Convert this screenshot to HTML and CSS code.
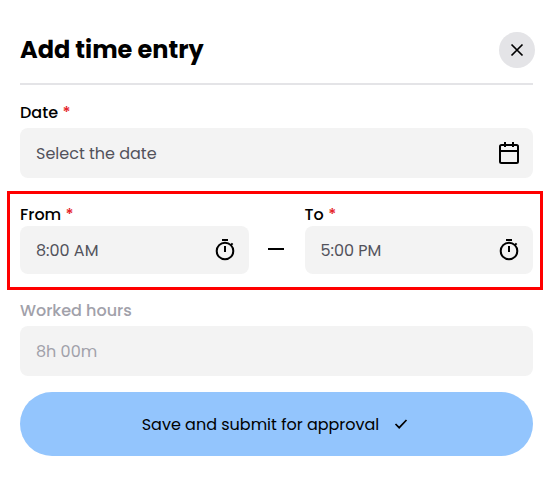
FILE: index.html
```html
<!DOCTYPE html>
<html lang="en">
<head>
<meta charset="utf-8">
<title>Add time entry</title>
<link rel="stylesheet" href="styles.css">
</head>
<body>
<main class="dialog">
  <header class="header">
    <h1 class="title">Add time entry</h1>
    <button class="close" aria-label="Close">
      <svg width="36" height="36" viewBox="0 0 36 36"><path d="M12.5 12.5l11 11M23.5 12.5l-11 11"/></svg>
    </button>
  </header>
  <section class="group">
    <div class="label"><span>Date</span><span class="req">*</span></div>
    <div class="field tall"><span class="value">Select the date</span>
      <svg width="24" height="24" viewBox="0 0 24 24"><rect x="3" y="4" width="18" height="18" rx="1.5"/><path d="M3 10h18M8 1v5M16 1v5"/></svg>
    </div>
  </section>
  <section class="times">
    <div class="group">
      <div class="label"><span>From</span><span class="req">*</span></div>
      <div class="field"><span class="value">8:00 AM</span>
        <svg width="24" height="24" viewBox="0 0 24 24"><circle cx="12" cy="13" r="8.3"/><path d="M9 2h6M12 8v6M17.6 7.4l2-2"/></svg>
      </div>
    </div>
    <span class="dash"></span>
    <div class="group">
      <div class="label"><span>To</span><span class="req">*</span></div>
      <div class="field"><span class="value">5:00 PM</span>
        <svg width="24" height="24" viewBox="0 0 24 24"><circle cx="12" cy="13" r="8.3"/><path d="M9 2h6M12 8v6M17.6 7.4l2-2"/></svg>
      </div>
    </div>
  </section>
  <section class="group worked">
    <div class="label"><span>Worked hours</span></div>
    <div class="field tall"><span class="value">8h 00m</span></div>
  </section>
  <button class="save"><span class="value">Save and submit for approval</span>
    <svg width="14" height="12" viewBox="0 0 14 12"><path d="M1.5 6l3.7 3.7L12.5 2"/></svg>
  </button>
</main>
</body>
</html>
```
FILE: styles.css
```css
* { box-sizing: border-box; }
body {
  margin: 0;
  background: #fff;
  color: #000;
  font: 16px/24px Poppins, Inter, "Open Sans", sans-serif;
}
button { border: 0; padding: 0; font: inherit; color: inherit; }
svg { display: block; fill: none; stroke: #000; stroke-width: 2; flex: none; }
span { white-space: nowrap; }
.dialog { width: 553px; height: 480px; padding: 32px 20px 0; }
.header {
  display: flex;
  justify-content: space-between;
  height: 53px;
  border-bottom: 2px solid #e4e4e7;
  margin-bottom: 15px;
}
.title { margin: 0; font-size: 24px; line-height: 36px; font-weight: 700; white-space: nowrap; }
.close { width: 36px; height: 36px; border-radius: 50%; background: #e4e4e7; margin-right: -2px; }
.close svg { stroke-width: 1.7; }
.label { display: flex; gap: 4.4px; height: 28px; line-height: 26px; font-weight: 500; }
.req { color: #e5252a; }
.field {
  display: flex;
  align-items: center;
  justify-content: space-between;
  height: 48px;
  padding: 0 12px 0 16px;
  border-radius: 8px;
  background: #f3f3f3;
  color: #52525b;
}
.value { padding-top: 2px; }
.tall { height: 50px; }
.times {
  display: grid;
  grid-template-columns: 228.5px 16px 228.5px;
  justify-content: space-between;
  height: 99px;
  margin: 13px -10px 0 -13px;
  padding: 7px 7px 0 10px;
  border: 3px solid #f00;
}
.times .label { height: 25px; line-height: 27px; }
.dash { height: 2px; margin: 47px 0.5px 0 -0.5px; background: #000; }
.worked { margin-top: 8px; color: #a1a1aa; }
.worked .field { color: #a1a1aa; }
.save {
  display: flex;
  align-items: center;
  justify-content: center;
  gap: 15px;
  width: 513px;
  height: 64px;
  margin-top: 16px;
  padding: 0 23px 0 20px;
  border-radius: 32px;
  background: #93c5fd;
}
.save svg { stroke-width: 1.7; }
```
